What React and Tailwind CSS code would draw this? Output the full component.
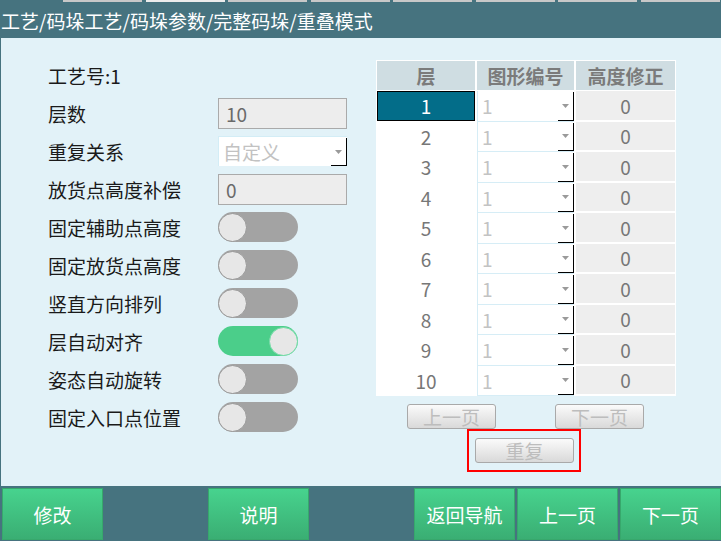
import React from 'react'

const FONT = "font-['Noto_Sans_CJK_SC','Microsoft_YaHei',sans-serif]"

const SETTINGS = [
  { label: '固定辅助点高度', on: false },
  { label: '固定放货点高度', on: false },
  { label: '竖直方向排列', on: false },
  { label: '层自动对齐', on: true },
  { label: '姿态自动旋转', on: false },
  { label: '固定入口点位置', on: false },
]

const LAYERS = [1, 2, 3, 4, 5, 6, 7, 8, 9, 10]

function Toggle({ on }) {
  return (
    <div className={`relative h-[30px] w-[80px] rounded-full ${on ? 'bg-[#4bce8a]' : 'bg-[#a3a3a3]'}`}>
      {/* knob */}
      <div
        className={`absolute top-[0.5px] h-[29px] w-[29px] rounded-full bg-[#e7e7e7] border ${
          on ? 'right-0 border-[#72dca6]' : 'left-0 border-[#989898]'
        }`}
      />
    </div>
  )
}

function Arrow() {
  return (
    <svg width="7" height="4" viewBox="0 0 7 4">
      <polygon points="0,0 7,0 3.5,4" fill="#9a9a9a" />
    </svg>
  )
}

function Field({ value }) {
  return (
    <div className="flex h-[31px] w-[129px] items-center border border-[#aaaaaa] bg-[#ededed] pl-[7px] text-[#6a6a6a]">
      {value}
    </div>
  )
}

function GrayButton({ children, className = '' }) {
  return (
    <div
      className={`flex items-center justify-center rounded-[3px] border border-[#a9a9a9] bg-linear-to-b from-[#fbfbfb] to-[#d9d9d9] text-[#bdbdbd] ${className}`}
    >
      {children}
    </div>
  )
}

function NavButton({ children }) {
  return (
    <div className="flex h-[52px] items-center justify-center border border-[#37a86c] bg-linear-to-b from-[#47d38e] to-[#3aae73] text-white">
      {children}
    </div>
  )
}

export default function App() {
  return (
    <div className={`flex h-[541px] w-[721px] flex-col overflow-hidden bg-[#e2f2f8] text-[19px] leading-none ${FONT}`}>
      {/* title bar with the tab leftovers peeking in on top */}
      <div className="flex h-[38px] flex-col bg-[#46737f]">
        <div className="flex h-[2px] gap-[3.5px] pl-[63px]">
          <div className="w-[79px] bg-[#c8c8c8]" />
          <div className="w-[79px] bg-[#ececec]" />
          <div className="w-[79px] bg-[#c8c8c8]" />
          <div className="w-[79px] bg-[#c8c8c8]" />
          <div className="w-[79px] bg-[#c8c8c8]" />
          <div className="w-[79px] bg-[#c8c8c8]" />
          <div className="w-[79px] bg-[#c8c8c8]" />
          <div className="w-[79px] bg-[#c8c8c8]" />
        </div>
        <div className="flex flex-1 items-center pl-[1px] text-white">工艺/码垛工艺/码垛参数/完整码垛/重叠模式</div>
      </div>

      <div className="flex h-[448px] border-l border-[#46737f]">
        {/* left: parameters */}
        <div className="w-[375px] pl-[47px] pt-[18px] text-[#1a1a1a]">
          <div className="flex h-[38px] items-center">工艺号:1</div>
          <div className="flex h-[38px] items-center">
            <div className="w-[170px]">层数</div>
            <Field value="10" />
          </div>
          <div className="flex h-[38px] items-center">
            <div className="w-[170px]">重复关系</div>
            <div className="relative flex h-[30px] w-[129px] items-center border-l border-t border-[#d3edf6] bg-white pl-[4px] text-[#c2c2c2]">
              自定义
              <div className="absolute right-0 top-[1px] bottom-0 flex w-[16px] items-center justify-center border-b border-r border-black">
                <Arrow />
              </div>
            </div>
          </div>
          <div className="flex h-[38px] items-center">
            <div className="w-[170px]">放货点高度补偿</div>
            <Field value="0" />
          </div>
          {SETTINGS.map((s) => (
            <div key={s.label} className="flex h-[38px] items-center">
              <div className="w-[170px]">{s.label}</div>
              <Toggle on={s.on} />
            </div>
          ))}
        </div>

        {/* right: layer table */}
        <div className="flex flex-col pt-[22px]">
          <div className="w-[300px] bg-white p-[1px] pb-0">
            <div className="mb-[1px] flex h-[29px] gap-[2px] font-bold text-[#7b7b7b]">
              <div className="flex w-[98px] items-center justify-center bg-[#cfdde2]">层</div>
              <div className="flex w-[97px] items-center justify-center bg-[#cfdde2]">图形编号</div>
              <div className="flex w-[99px] items-center justify-center bg-[#cfdde2]">高度修正</div>
            </div>
            {LAYERS.map((n) => (
              <div key={n} className="flex h-[30.5px] items-start gap-[2px] text-[#777777]">
                <div
                  className={`flex h-[29.5px] w-[98px] items-center justify-center ${
                    n === 1 ? 'border border-black bg-[#036d89] text-white' : 'bg-white'
                  }`}
                >
                  {n}
                </div>
                <div className="h-full w-[97px] border-b-[1.5px] border-[#d6edf6]">
                  <div className="relative flex h-full items-center border-l border-[#d6edf6] bg-white pl-[4px] text-[#c3c3c3]">
                    1
                    <div className="absolute right-0 top-[1px] bottom-0 flex w-[16px] items-center justify-center border-b border-r border-black">
                      <Arrow />
                    </div>
                  </div>
                </div>
                <div className="flex h-[28.5px] w-[99px] items-center justify-center bg-[#eeeeee]">0</div>
              </div>
            ))}
          </div>

          <div className="mt-[8px] flex pl-[31px]">
            <GrayButton className="h-[25px] w-[89px]">上一页</GrayButton>
            <GrayButton className="ml-[59px] h-[25px] w-[89px]">下一页</GrayButton>
          </div>
          <div className="ml-[91px] w-[114px] border-2 border-[#ff0000] pl-[6px] pr-[5px] pt-[7px] pb-[7px]">
            <GrayButton className="h-[25px] w-full">重复</GrayButton>
          </div>
        </div>
      </div>

      {/* bottom navigation */}
      <div className="grid h-[55px] grid-cols-[repeat(7,101px)] gap-[2px] bg-[#46737f] pl-[2px] pt-[2px]">
        <NavButton>修改</NavButton>
        <div />
        <NavButton>说明</NavButton>
        <div />
        <NavButton>返回导航</NavButton>
        <NavButton>上一页</NavButton>
        <NavButton>下一页</NavButton>
      </div>
    </div>
  )
}
